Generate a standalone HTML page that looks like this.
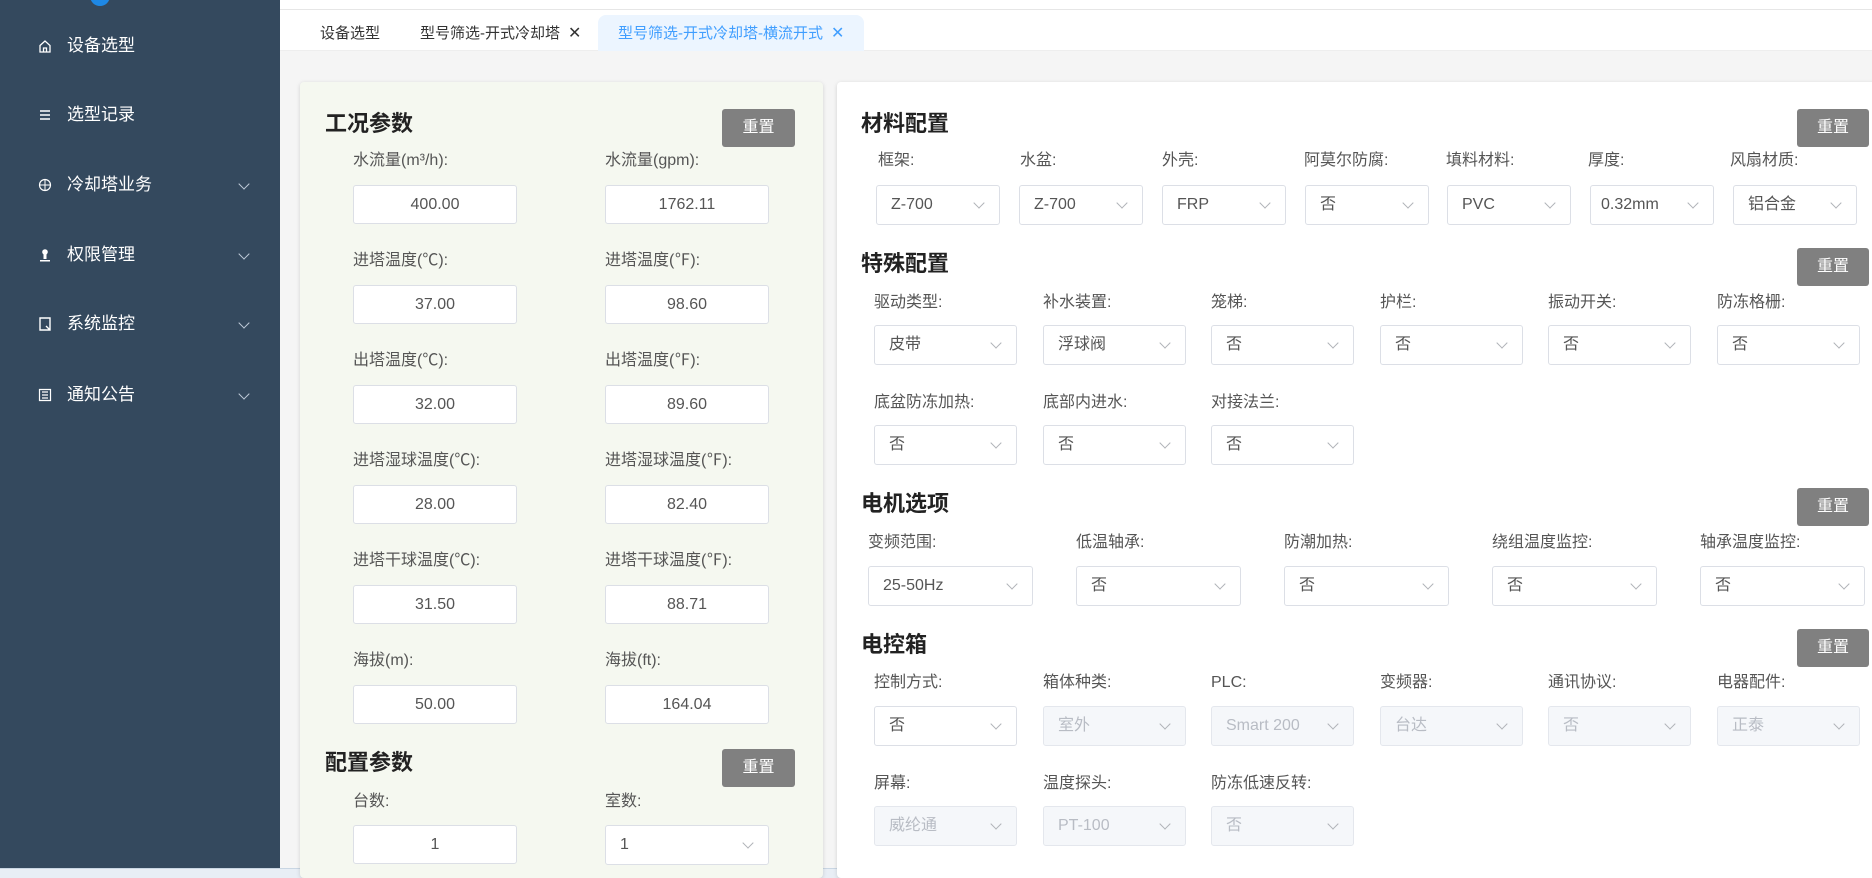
<!DOCTYPE html>
<html><head><meta charset="utf-8"><style>
*{box-sizing:border-box;margin:0;padding:0}
body{width:1872px;height:878px;overflow:hidden;background:#f5f5f5;font-family:"Liberation Sans","Noto Sans CJK SC",sans-serif;position:relative;color:#606266}
.abs{position:absolute}
#side{left:0;top:0;width:280px;height:868px;background:#34495e;color:#fff}
.mi{position:absolute;left:0;width:280px;font-size:17px;height:30px;line-height:30px}
.mi .ic{position:absolute;left:38px;top:8px;width:14px;height:14px}
.mi .t{position:absolute;left:67px}
.mi .ch{position:absolute;left:240px;top:10px;width:8px;height:8px;border-right:1.3px solid #bfcbd9;border-bottom:1.3px solid #bfcbd9;transform:rotate(45deg)}
#top{left:280px;top:0;right:0;height:51px;background:#fff;border-top:9px solid #fff;box-shadow:inset 0 9px 0 -8px #e6e6e6}
.tab{position:absolute;top:16px;height:35px;line-height:35px;font-size:15px;color:#333}
.x{font-size:16px;margin-left:8px;font-weight:300}
.card{position:absolute;top:82px;bottom:0;border-radius:4px;box-shadow:0 1px 4px rgba(0,0,0,.15)}
h3{position:absolute;font-size:22px;font-weight:bold;color:#222;line-height:28px}
.btn{position:absolute;width:73px;height:38px;background:#808080;color:#fff;border-radius:3px;font-size:16px;text-align:center;line-height:38px}
.lb{position:absolute;font-size:16px;color:#555;line-height:20px;margin-top:2px}
.in{position:absolute;width:164px;height:39px;background:#fff;border:1px solid #dcdfe6;border-radius:3px;text-align:center;line-height:37px;font-size:16px;color:#555}
.sel{position:absolute;height:40px;background:#fff;border:1px solid #dcdfe6;border-radius:3px;line-height:38px;font-size:16px;color:#555;padding-left:14px}
.sel:after{content:"";position:absolute;right:16px;top:13px;width:7px;height:7px;border-right:1.2px solid #b0b3b8;border-bottom:1.2px solid #b0b3b8;transform:rotate(45deg)}
.dis{background:#f5f7fa;color:#b8bcc4;border-color:#e4e7ed}
</style></head><body>
<div id="side" class="abs">
<div class="abs" style="left:90px;top:-14px;width:20px;height:20px;border-radius:50%;background:#1e88e5"></div>
<div class="mi" style="top:31px"><svg class="ic" viewBox="0 0 14 14"><path d="M2 6.5L7 2l5 4.5V13H2z M5.5 13V9h3v4" fill="none" stroke="#fff" stroke-width="1.3"/></svg><span class="t">设备选型</span></div>
<div class="mi" style="top:100px"><svg class="ic" viewBox="0 0 14 14"><path d="M2 3h10M2 7h10M2 11h10" stroke="#fff" stroke-width="1.6"/></svg><span class="t">选型记录</span></div>
<div class="mi" style="top:170px"><svg class="ic" viewBox="0 0 14 14"><circle cx="7" cy="7" r="5.5" fill="none" stroke="#fff" stroke-width="1.2"/><path d="M7 1v12M1 7h12" stroke="#fff" stroke-width="1"/></svg><span class="t">冷却塔业务</span><i class="ch"></i></div>
<div class="mi" style="top:240px"><svg class="ic" viewBox="0 0 14 14"><circle cx="7" cy="4" r="2.8" fill="#fff"/><path d="M5.5 6h3v5h-3zM2 12h10v1.5H2z" fill="#fff"/></svg><span class="t">权限管理</span><i class="ch"></i></div>
<div class="mi" style="top:309px"><svg class="ic" viewBox="0 0 14 14"><path d="M2 1h10v12H2z M8 9l4 4" fill="none" stroke="#fff" stroke-width="1.4"/></svg><span class="t">系统监控</span><i class="ch"></i></div>
<div class="mi" style="top:380px"><svg class="ic" viewBox="0 0 14 14"><path d="M1.5 1.5h11v11h-11z M4 4h6M4 7h6M4 10h6" fill="none" stroke="#fff" stroke-width="1.2"/></svg><span class="t">通知公告</span><i class="ch"></i></div>
</div>
<div class="abs" style="left:0;top:868px;width:1872px;height:10px;background:#e8eef5;border-top:1px solid #c9d6e3"></div>
<div id="top" class="abs"></div>
<div class="abs" style="left:280px;top:50px;right:0;height:1px;background:#eee"></div>
<div class="tab" style="left:320px">设备选型</div>
<div class="tab" style="left:420px">型号筛选-开式冷却塔<span class="x">✕</span></div>
<div class="abs" style="left:598px;top:15px;width:266px;height:36px;background:#ecf5ff;border-radius:8px 8px 0 0"></div>
<div class="tab" style="left:618px;color:#409eff">型号筛选-开式冷却塔-横流开式<span class="x">✕</span></div>

<div class="card" style="left:300px;width:523px;background:#f5f8f0"></div>
<div class="card" style="left:837px;width:1040px;background:#fff"></div>

<h3 style="left:325px;top:110px">工况参数</h3>
<div class="btn" style="left:722px;top:109px">重置</div>
<div class="lb" style="left:353px;top:149px">水流量(m³/h):</div><div class="lb" style="left:605px;top:149px">水流量(gpm):</div>
<div class="in" style="left:353px;top:185px">400.00</div><div class="in" style="left:605px;top:185px">1762.11</div>
<div class="lb" style="left:353px;top:249px">进塔温度(℃):</div><div class="lb" style="left:605px;top:249px">进塔温度(℉):</div>
<div class="in" style="left:353px;top:285px">37.00</div><div class="in" style="left:605px;top:285px">98.60</div>
<div class="lb" style="left:353px;top:349px">出塔温度(℃):</div><div class="lb" style="left:605px;top:349px">出塔温度(℉):</div>
<div class="in" style="left:353px;top:385px">32.00</div><div class="in" style="left:605px;top:385px">89.60</div>
<div class="lb" style="left:353px;top:449px">进塔湿球温度(℃):</div><div class="lb" style="left:605px;top:449px">进塔湿球温度(℉):</div>
<div class="in" style="left:353px;top:485px">28.00</div><div class="in" style="left:605px;top:485px">82.40</div>
<div class="lb" style="left:353px;top:549px">进塔干球温度(℃):</div><div class="lb" style="left:605px;top:549px">进塔干球温度(℉):</div>
<div class="in" style="left:353px;top:585px">31.50</div><div class="in" style="left:605px;top:585px">88.71</div>
<div class="lb" style="left:353px;top:649px">海拔(m):</div><div class="lb" style="left:605px;top:649px">海拔(ft):</div>
<div class="in" style="left:353px;top:685px">50.00</div><div class="in" style="left:605px;top:685px">164.04</div>
<h3 style="left:325px;top:749px">配置参数</h3>
<div class="btn" style="left:722px;top:749px">重置</div>
<div class="lb" style="left:353px;top:790px">台数:</div><div class="lb" style="left:605px;top:790px">室数:</div>
<div class="in" style="left:353px;top:825px">1</div><div class="sel" style="left:605px;top:825px;width:164px">1</div>

<h3 style="left:861px;top:110px">材料配置</h3>
<div class="btn" style="left:1797px;top:109px;width:72px">重置</div>
<div class="lb" style="left:878px;top:149px">框架:</div><div class="sel" style="left:876px;top:185px;width:124px">Z-700</div>
<div class="lb" style="left:1020px;top:149px">水盆:</div><div class="sel" style="left:1019px;top:185px;width:124px">Z-700</div>
<div class="lb" style="left:1162px;top:149px">外壳:</div><div class="sel" style="left:1162px;top:185px;width:124px">FRP</div>
<div class="lb" style="left:1304px;top:149px">阿莫尔防腐:</div><div class="sel" style="left:1305px;top:185px;width:124px">否</div>
<div class="lb" style="left:1446px;top:149px">填料材料:</div><div class="sel" style="left:1447px;top:185px;width:124px">PVC</div>
<div class="lb" style="left:1588px;top:149px">厚度:</div><div class="sel" style="left:1590px;top:185px;width:124px;padding-left:10px">0.32mm</div>
<div class="lb" style="left:1730px;top:149px">风扇材质:</div><div class="sel" style="left:1733px;top:185px;width:124px">铝合金</div>

<h3 style="left:861px;top:250px">特殊配置</h3>
<div class="btn" style="left:1797px;top:248px;width:72px">重置</div>
<div class="lb" style="left:874px;top:291px">驱动类型:</div><div class="sel" style="left:874px;top:325px;width:143px">皮带</div>
<div class="lb" style="left:1043px;top:291px">补水装置:</div><div class="sel" style="left:1043px;top:325px;width:143px">浮球阀</div>
<div class="lb" style="left:1211px;top:291px">笼梯:</div><div class="sel" style="left:1211px;top:325px;width:143px">否</div>
<div class="lb" style="left:1380px;top:291px">护栏:</div><div class="sel" style="left:1380px;top:325px;width:143px">否</div>
<div class="lb" style="left:1548px;top:291px">振动开关:</div><div class="sel" style="left:1548px;top:325px;width:143px">否</div>
<div class="lb" style="left:1717px;top:291px">防冻格栅:</div><div class="sel" style="left:1717px;top:325px;width:143px">否</div>
<div class="lb" style="left:874px;top:391px">底盆防冻加热:</div><div class="sel" style="left:874px;top:425px;width:143px">否</div>
<div class="lb" style="left:1043px;top:391px">底部内进水:</div><div class="sel" style="left:1043px;top:425px;width:143px">否</div>
<div class="lb" style="left:1211px;top:391px">对接法兰:</div><div class="sel" style="left:1211px;top:425px;width:143px">否</div>

<h3 style="left:861px;top:490px">电机选项</h3>
<div class="btn" style="left:1797px;top:488px;width:72px">重置</div>
<div class="lb" style="left:868px;top:531px">变频范围:</div><div class="sel" style="left:868px;top:566px;width:165px">25-50Hz</div>
<div class="lb" style="left:1076px;top:531px">低温轴承:</div><div class="sel" style="left:1076px;top:566px;width:165px">否</div>
<div class="lb" style="left:1284px;top:531px">防潮加热:</div><div class="sel" style="left:1284px;top:566px;width:165px">否</div>
<div class="lb" style="left:1492px;top:531px">绕组温度监控:</div><div class="sel" style="left:1492px;top:566px;width:165px">否</div>
<div class="lb" style="left:1700px;top:531px">轴承温度监控:</div><div class="sel" style="left:1700px;top:566px;width:165px">否</div>

<h3 style="left:861px;top:631px">电控箱</h3>
<div class="btn" style="left:1797px;top:629px;width:72px">重置</div>
<div class="lb" style="left:874px;top:671px">控制方式:</div><div class="sel" style="left:874px;top:706px;width:143px">否</div>
<div class="lb" style="left:1043px;top:671px">箱体种类:</div><div class="sel dis" style="left:1043px;top:706px;width:143px">室外</div>
<div class="lb" style="left:1211px;top:671px">PLC:</div><div class="sel dis" style="left:1211px;top:706px;width:143px">Smart 200</div>
<div class="lb" style="left:1380px;top:671px">变频器:</div><div class="sel dis" style="left:1380px;top:706px;width:143px">台达</div>
<div class="lb" style="left:1548px;top:671px">通讯协议:</div><div class="sel dis" style="left:1548px;top:706px;width:143px">否</div>
<div class="lb" style="left:1717px;top:671px">电器配件:</div><div class="sel dis" style="left:1717px;top:706px;width:143px">正泰</div>
<div class="lb" style="left:874px;top:772px">屏幕:</div><div class="sel dis" style="left:874px;top:806px;width:143px">威纶通</div>
<div class="lb" style="left:1043px;top:772px">温度探头:</div><div class="sel dis" style="left:1043px;top:806px;width:143px">PT-100</div>
<div class="lb" style="left:1211px;top:772px">防冻低速反转:</div><div class="sel dis" style="left:1211px;top:806px;width:143px">否</div>
</body></html>
